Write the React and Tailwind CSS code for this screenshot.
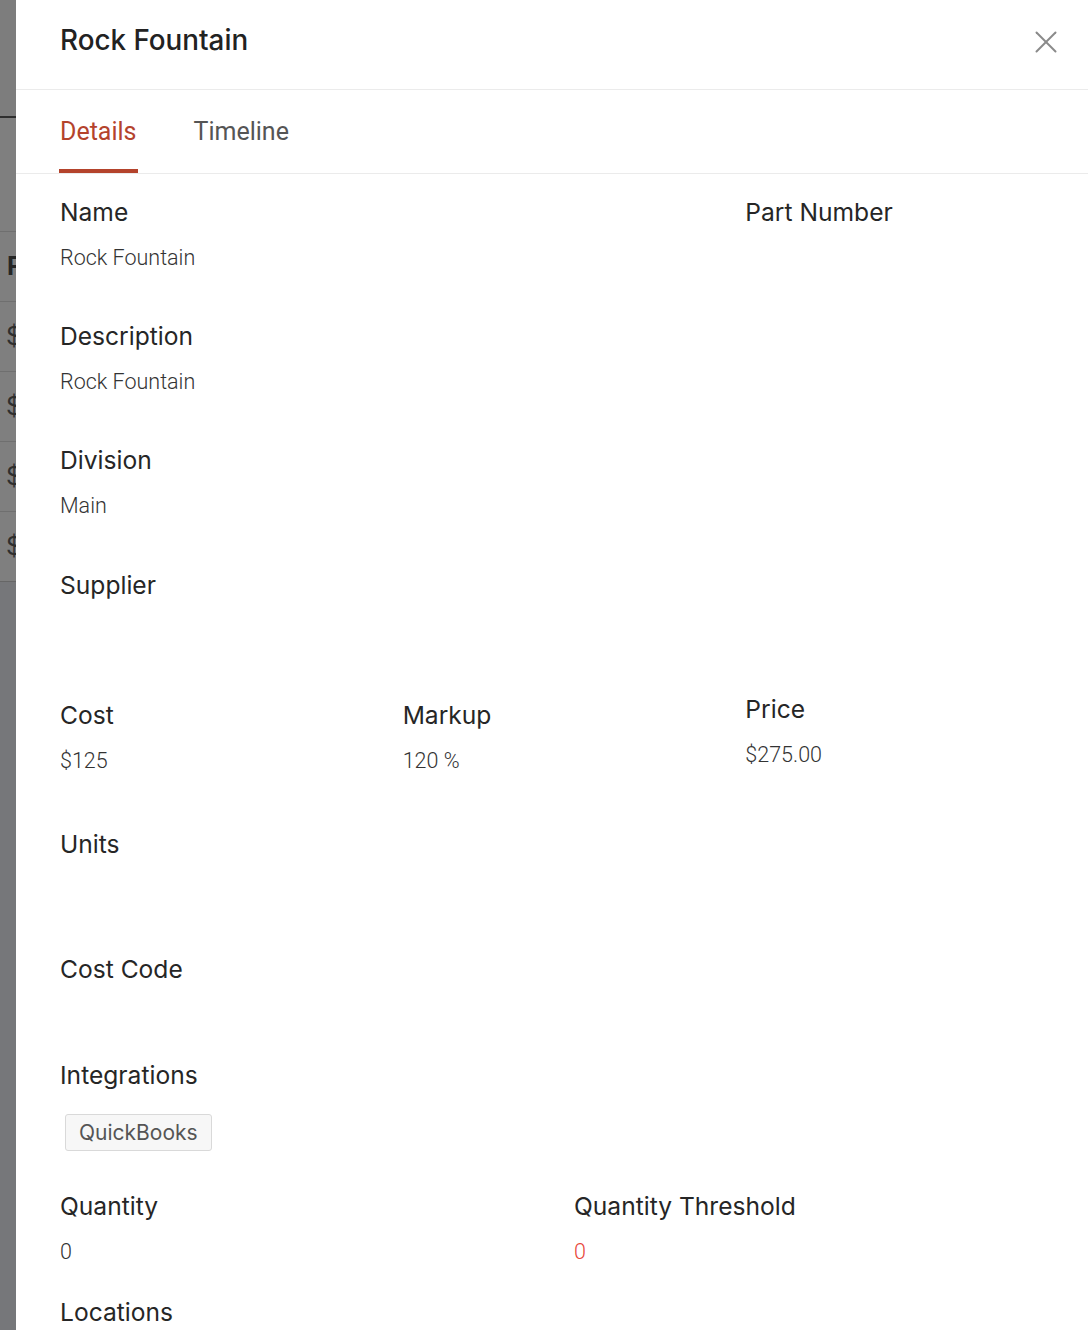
import React from "react";

const Label = ({ children, className = "" }) => (
  <div className={"h-8 leading-8 text-[24.6px] text-[#262626] font-['Inter',sans-serif] whitespace-nowrap " + className}>
    {children}
  </div>
);

const Value = ({ children, className = "" }) => (
  <div className={"mt-4 leading-7 text-[21.5px] font-light font-['Roboto',sans-serif] whitespace-nowrap " + className}>
    {children}
  </div>
);

function Backdrop() {
  const rows = ["$", "$", "$", "$"];
  return (
    <div className="w-4 shrink-0 overflow-hidden bg-[#76777a] flex flex-col">
      <div className="h-[116px] bg-[#7d7d7d] shrink-0" />
      <div className="h-[2px] bg-[#2f2f2f] shrink-0" />
      <div className="h-[113px] bg-[#7f7f7f] shrink-0" />
      <div className="h-[70px] bg-[#7f7f7f] border-t border-[#6f6f6f] shrink-0 flex items-center pl-[7px]">
        <span className="text-[25px] font-bold text-[#262626] font-['Inter',sans-serif] leading-none">F</span>
      </div>
      {rows.map((r, i) => (
        <div key={i} className="h-[70px] bg-[#7f7f7f] border-t border-[#6f6f6f] shrink-0 flex items-center pl-[6px]">
          <span className="text-[25px] text-[#2e2e2e] font-['Inter',sans-serif] leading-none">{r}</span>
        </div>
      ))}
      <div className="h-[1px] bg-[#666] shrink-0" />
      <div className="flex-1 bg-[#76777a]" />
    </div>
  );
}

export default function App() {
  return (
    <div className="h-[1330px] w-[1088px] overflow-hidden flex bg-white">
      <Backdrop />
      <div className="flex-1 bg-white flex flex-col">
        {/* Header */}
        <div className="h-[90px] shrink-0 border-b border-[#ebebeb] flex items-center justify-between pl-[44px] pr-[30px]">
          <h1 className="text-[27.8px] font-medium text-[#222] font-['Inter',sans-serif] leading-none -mt-[8px]">Rock Fountain</h1>
          <button className="w-[24px] h-[24px] flex items-center justify-center -mt-[6px]">
            <svg width="22" height="22" viewBox="0 0 22 22" fill="none" stroke="#8a8a8a" strokeWidth="2" strokeLinecap="round">
              <path d="M1.5 1.5 L20.5 20.5" />
              <path d="M20.5 1.5 L1.5 20.5" />
            </svg>
          </button>
        </div>
        {/* Tabs */}
        <div className="h-[84px] shrink-0 border-b border-[#ebebeb] flex items-end pl-[43px] gap-[56px]">
          <div className="relative h-full flex items-center px-px">
            <span className="text-[25px] text-[#b4432c] font-['Roboto',sans-serif] leading-none">Details</span>
            <div className="absolute left-0 right-0 bottom-0 h-[4px] bg-[#b4432c]" />
          </div>
          <div className="h-full flex items-center">
            <span className="text-[25px] text-[#555] font-['Roboto',sans-serif] leading-none">Timeline</span>
          </div>
        </div>
        {/* Body */}
        <div className="pl-[44px] pt-[22px] flex flex-col">
          <div className="grid grid-cols-3">
            <div className="col-span-2">
              <Label>Name</Label>
              <Value className="text-[#333]">Rock Fountain</Value>
            </div>
            <div>
              <Label>Part Number</Label>
            </div>
          </div>

          <div className="mt-[48px]">
            <Label>Description</Label>
            <Value className="text-[#333]">Rock Fountain</Value>
          </div>

          <div className="mt-[48px]">
            <Label>Division</Label>
            <Value className="text-[#333]">Main</Value>
          </div>

          <div className="mt-[49px]">
            <Label>Supplier</Label>
          </div>

          <div className="mt-[92px] grid grid-cols-3">
            <div className="pt-[6px]">
              <Label>Cost</Label>
              <Value className="text-[#333]">$125</Value>
            </div>
            <div className="pt-[6px]">
              <Label>Markup</Label>
              <Value className="text-[#333]">120 %</Value>
            </div>
            <div>
              <Label>Price</Label>
              <Value className="text-[#333]">$275.00</Value>
            </div>
          </div>

          <div className="mt-[53px]">
            <Label>Units</Label>
          </div>

          <div className="mt-[93px]">
            <Label>Cost Code</Label>
          </div>

          <div className="mt-[74px]">
            <Label>Integrations</Label>
            <div className="mt-[23px] ml-[5px] inline-flex items-center h-[37px] px-[13px] border border-[#d9d9d9] bg-[#f7f7f7] rounded-[3px]">
              <span className="text-[21px] text-[#555] font-['Inter',sans-serif] leading-none">QuickBooks</span>
            </div>
          </div>

          <div className="mt-[39px] grid grid-cols-2">
            <div>
              <Label>Quantity</Label>
              <Value className="text-[#333]">0</Value>
            </div>
            <div>
              <Label>Quantity Threshold</Label>
              <Value className="text-[#e8473a]">0</Value>
            </div>
          </div>

          <div className="mt-[30px]">
            <Label>Locations</Label>
          </div>
        </div>
      </div>
    </div>
  );
}
